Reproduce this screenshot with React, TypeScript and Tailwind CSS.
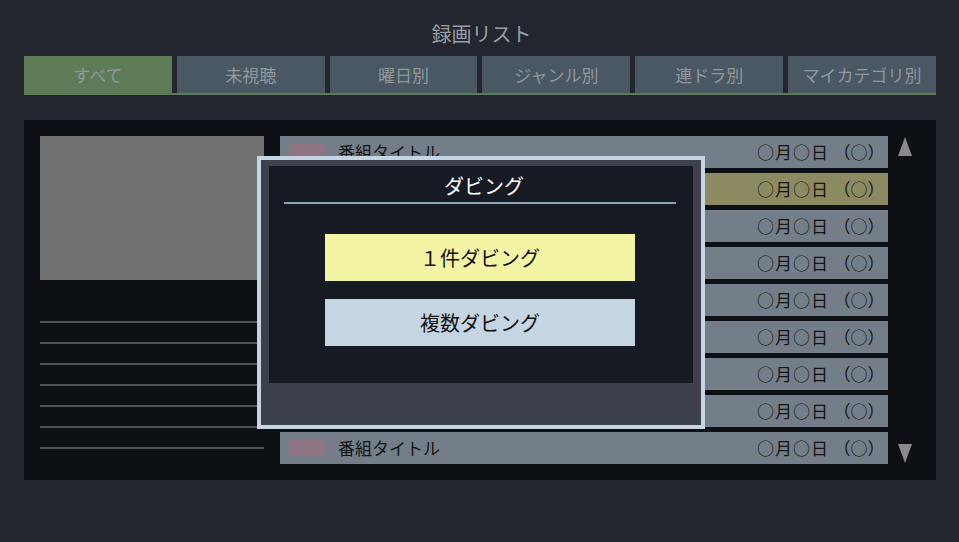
import React from 'react';

const tabs = ['すべて', '未視聴', '曜日別', 'ジャンル別', '連ドラ別', 'マイカテゴリ別'];

const rows = Array.from({ length: 9 }, (_, i) => ({
  title: '番組タイトル',
  day: '○月○日',
  week: '（○）',
  selected: i === 1,
}));

export default function App() {
  return (
    <div
      className="relative w-[959px] h-[542px] bg-[#23262e] overflow-hidden"
      style={{ fontFamily: '"Noto Sans CJK JP", "Noto Sans", sans-serif' }}
    >
      {/* Header */}
      <div className="pt-[20px] h-[56px] text-center text-[20px] leading-[28px] text-[#9a9ea4] pl-[4px]">
        録画リスト
      </div>

      {/* Tabs */}
      <div className="mx-[24px] w-[912px] border-b-2 border-[#5e7b58] flex gap-[5px]">
        {tabs.map((t, i) => (
          <div
            key={t}
            className={`flex-1 h-[37px] flex items-center justify-center text-[17px] text-[#92979c] ${
              i === 0 ? 'bg-[#5e7b58]' : 'bg-[#4a5864]'
            }`}
          >
            {t}
          </div>
        ))}
      </div>

      {/* Main panel */}
      <div className="mt-[25px] mx-[24px] w-[912px] h-[360px] bg-[#0d1015] flex pt-[16px] pl-[16px]">
        {/* Left info */}
        <div className="w-[224px] shrink-0 flex flex-col">
          <div className="h-[144px] bg-[#727272]" />
          <div className="mt-[41px] flex flex-col gap-[19px]">
            {Array.from({ length: 7 }).map((_, i) => (
              <div key={i} className="h-[2px] bg-[#505254]" />
            ))}
          </div>
        </div>

        {/* List */}
        <div className="ml-[16px] w-[608px] flex flex-col gap-[5px]">
          {rows.map((r, i) => (
            <div
              key={i}
              className={`h-[32px] flex items-center pl-[9px] pr-[12px] ${
                r.selected ? 'bg-[#8c8a60]' : 'bg-[#747e88]'
              }`}
            >
              <div className="w-[36px] h-[16px] bg-[#8e7482]" />
              <span className="ml-[13px] text-[17px] text-[#141414]">{r.title}</span>
              <span className="ml-auto text-[17px] tracking-[1px] text-[#141414]">{r.day}</span>
              <span className="ml-[13px] text-[17px] text-[#141414] [font-feature-settings:'halt']">{r.week}</span>
            </div>
          ))}
        </div>

        {/* Scroll arrows */}
        <div className="pl-[10px] flex flex-col justify-between h-[328px]">
          <svg width="14" height="19" viewBox="0 0 14 19" className="mt-[1px]">
            <polygon points="7,0 14,19 0,19" fill="#8a8a8a" />
          </svg>
          <svg width="14" height="19" viewBox="0 0 14 19" className="mb-[1px]">
            <polygon points="0,0 14,0 7,19" fill="#8a8a8a" />
          </svg>
        </div>
      </div>

      {/* Dubbing dialog */}
      <div className="absolute left-[257px] top-[156px] w-[448px] h-[273px] border-4 border-[#c5d6e2] bg-[#3d414b] pt-[6px] px-[8px]">
        <div className="h-[217px] bg-[#161b23] flex flex-col items-start">
          <div className="mt-[6px] w-full text-center pl-[6px] text-[20px] leading-[28px] text-white">ダビング</div>
          <div className="mt-[2px] ml-[15px] w-[392px] h-[2px] bg-[#8aa3b3]" />
          <div className="mt-[30px] ml-[56px] w-[310px] h-[47px] bg-[#f3f4a4] flex items-center justify-center text-[20px] text-[#111]">
            １件ダビング
          </div>
          <div className="mt-[18px] ml-[56px] w-[310px] h-[47px] bg-[#c5d6e2] flex items-center justify-center text-[20px] text-[#111]">
            複数ダビング
          </div>
        </div>
      </div>
    </div>
  );
}
